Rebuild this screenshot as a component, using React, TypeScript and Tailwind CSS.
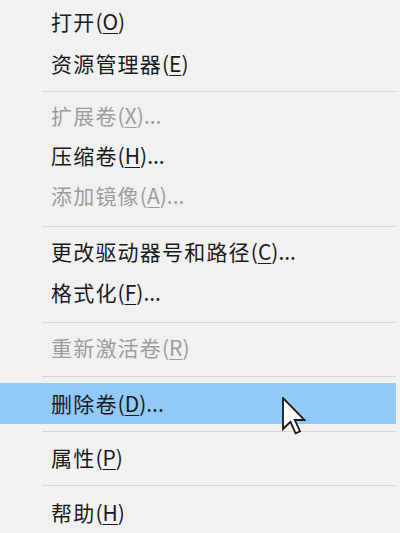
import React from "react";

type Item =
  | { kind: "item"; label: string; key: string; suffix?: string; disabled?: boolean; h: string; active?: boolean }
  | { kind: "sep"; pt: string; pb: string };

const items: Item[] = [
  { kind: "item", label: "打开", key: "O", h: "h-[42px]" },
  { kind: "item", label: "资源管理器", key: "E", h: "h-[42px]" },
  { kind: "sep", pt: "pt-[7px]", pb: "pb-[3px]" },
  { kind: "item", label: "扩展卷", key: "X", suffix: "...", disabled: true, h: "h-[40px]" },
  { kind: "item", label: "压缩卷", key: "H", suffix: "...", h: "h-[40px]" },
  { kind: "item", label: "添加镜像", key: "A", suffix: "...", disabled: true, h: "h-[40px]" },
  { kind: "sep", pt: "pt-[11px]", pb: "pb-[4px]" },
  { kind: "item", label: "更改驱动器号和路径", key: "C", suffix: "...", h: "h-[41px]" },
  { kind: "item", label: "格式化", key: "F", suffix: "...", h: "h-[40px]" },
  { kind: "sep", pt: "pt-[10px]", pb: "pb-[4px]" },
  { kind: "item", label: "重新激活卷", key: "R", disabled: true, h: "h-[40px]" },
  { kind: "sep", pt: "pt-[9px]", pb: "pb-[6px]" },
  { kind: "item", label: "删除卷", key: "D", suffix: "...", h: "h-[41px]", active: true },
  { kind: "sep", pt: "pt-[7px]", pb: "pb-[5px]" },
  { kind: "item", label: "属性", key: "P", h: "h-[40px]" },
  { kind: "sep", pt: "pt-[8px]", pb: "pb-[6px]" },
  { kind: "item", label: "帮助", key: "H", h: "h-[40px]" },
];

function Cursor() {
  return (
    <svg
      className="absolute left-[282px] top-[397px]"
      width="24"
      height="38"
      viewBox="0 0 12 19"
    >
      <path
        d="M0.5 0.5 L0.5 16 L4.2 12.4 L6.8 18.2 L9 17.2 L6.4 11.5 L11.3 11.5 Z"
        fill="#ffffff"
        stroke="#1a1a1a"
        strokeWidth="0.9"
        strokeLinejoin="miter"
      />
    </svg>
  );
}

export default function App() {
  return (
    <div
      className="relative w-[400px] h-[533px] bg-[#f1f1f1] overflow-hidden"
      style={{ fontFamily: '"Noto Sans CJK SC", "Noto Sans", sans-serif' }}
    >
      <div className="flex flex-col w-[396px]">
        {items.map((it, i) =>
          it.kind === "sep" ? (
            <div key={i} className={`${it.pt} ${it.pb} pl-[42px]`}>
              <div className="h-px bg-[#d6d6d6]" />
            </div>
          ) : (
            <div
              key={i}
              className={`${it.h} flex items-center pl-[51px] text-[21px] tracking-[1.2px] leading-none ${
                it.active ? "bg-[#91c9f7]" : ""
              } ${it.disabled ? "text-[#9d9d9d]" : "text-[#1a1a1a]"}`}
            >
              <span>
                {it.label}
                <span className="tracking-normal">
                  (<span className="underline underline-offset-[3px] decoration-1">{it.key}</span>)
                  {it.suffix ?? ""}
                </span>
              </span>
            </div>
          )
        )}
      </div>
      <Cursor />
    </div>
  );
}
